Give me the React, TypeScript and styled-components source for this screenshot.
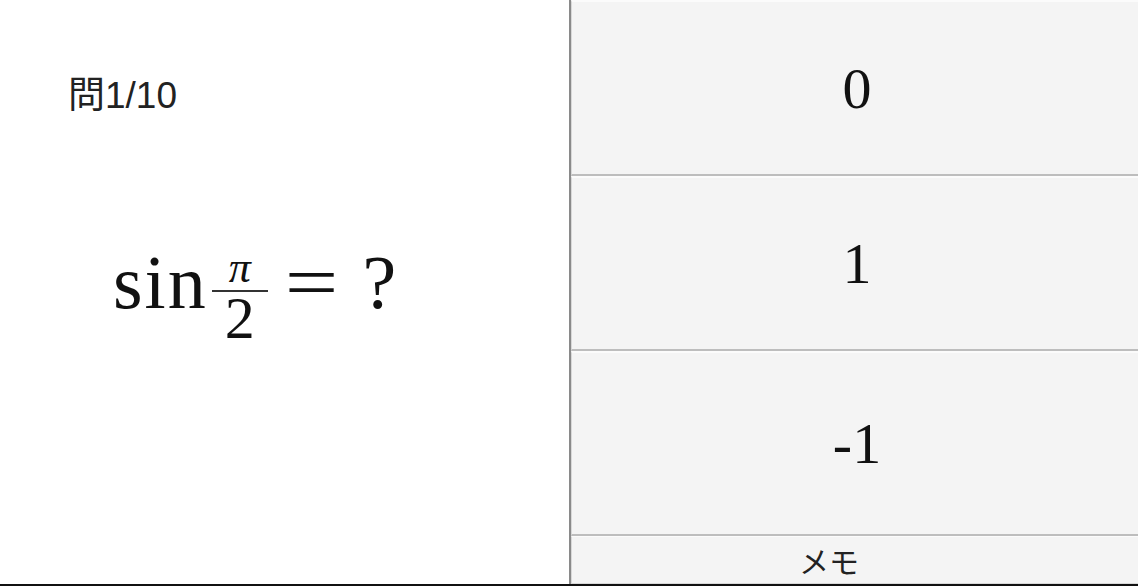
import React from "react";
import styled, { createGlobalStyle } from "styled-components";

const Global = createGlobalStyle`
  html, body { margin: 0; padding: 0; background: #fff; }
  body { font-family: "Liberation Sans", Arial, sans-serif; }
`;

const Page = styled.div`
  width: 1138px;
  height: 586px;
  box-sizing: border-box;
  border-bottom: 2px solid #111;
  display: flex;
  overflow: hidden;
`;

const QuestionPane = styled.section`
  width: 569px;
  flex: none;
  box-sizing: border-box;
  padding: 76px 0 0 68px;
  display: flex;
  flex-direction: column;
`;

const Counter = styled.div`
  font-family: "Liberation Sans", "Noto Sans CJK JP", sans-serif;
  font-size: 37px;
  line-height: 40px;
  color: #222;
`;

const Formula = styled.div`
  margin: 115px 0 0 45px;
  display: flex;
  align-items: center;
  font-family: "Liberation Serif", "Times New Roman", serif;
  font-size: 76px;
  color: #111;
  line-height: 1;
`;

const Func = styled.span`
  letter-spacing: 2px;
`;

const Fraction = styled.span`
  display: inline-flex;
  flex-direction: column;
  align-items: center;
  margin: 0 18px 0 4px;
  transform: translateY(15px);
`;

const Numerator = styled.span`
  font-size: 44px;
  font-style: italic;
  line-height: 44px;
`;

const Bar = styled.span`
  width: 56px;
  height: 2px;
  background: #333;
`;

const Denominator = styled.span`
  font-size: 60px;
  line-height: 60px;
  margin-top: -4px;
`;

const Op = styled.span`
  display: inline-block;
  transform: scaleX(1.25);
  margin: 0 30px 0 4px;
`;

const AnswerPane = styled.section`
  flex: 1;
  display: flex;
  flex-direction: column;
  border-left: 2px solid #8a8a8a;
  background: #f4f4f4;
`;

const Answer = styled.button<{ $h: number }>`
  height: ${(p) => p.$h}px;
  flex: none;
  box-sizing: border-box;
  margin: 0;
  padding: 0 0 0 4px;
  background: #f4f4f4;
  border: none;
  border-top: 2px solid #fbfbfb;
  border-left: 1px solid #d8d8d8;
  border-bottom: 2px solid #bdbdbd;
  font-family: "Liberation Serif", "Times New Roman", serif;
  font-size: 58px;
  color: #111;
  display: flex;
  align-items: center;
  justify-content: center;
  cursor: pointer;
`;

const Memo = styled.button`
  flex: 1;
  box-sizing: border-box;
  margin: 0;
  padding: 0 52px 0 0;
  background: #f4f4f4;
  border: none;
  border-top: 1px solid #fbfbfb;
  border-left: 1px solid #d8d8d8;
  border-bottom: 1px solid #d8d8d8;
  font-family: "Noto Sans CJK JP", sans-serif;
  font-size: 30px;
  line-height: 1;
  color: #222;
  display: flex;
  align-items: center;
  justify-content: center;
`;

export default function App() {
  return (
    <>
      <Global />
      <Page>
        <QuestionPane>
          <Counter>問1/10</Counter>
          <Formula>
            <Func>sin</Func>
            <Fraction>
              <Numerator>π</Numerator>
              <Bar />
              <Denominator>2</Denominator>
            </Fraction>
            <Op>=</Op>
            <span>?</span>
          </Formula>
        </QuestionPane>
        <AnswerPane>
          <Answer $h={176}>0</Answer>
          <Answer $h={175}>1</Answer>
          <Answer $h={185}>-1</Answer>
          <Memo>メモ</Memo>
        </AnswerPane>
      </Page>
    </>
  );
}
